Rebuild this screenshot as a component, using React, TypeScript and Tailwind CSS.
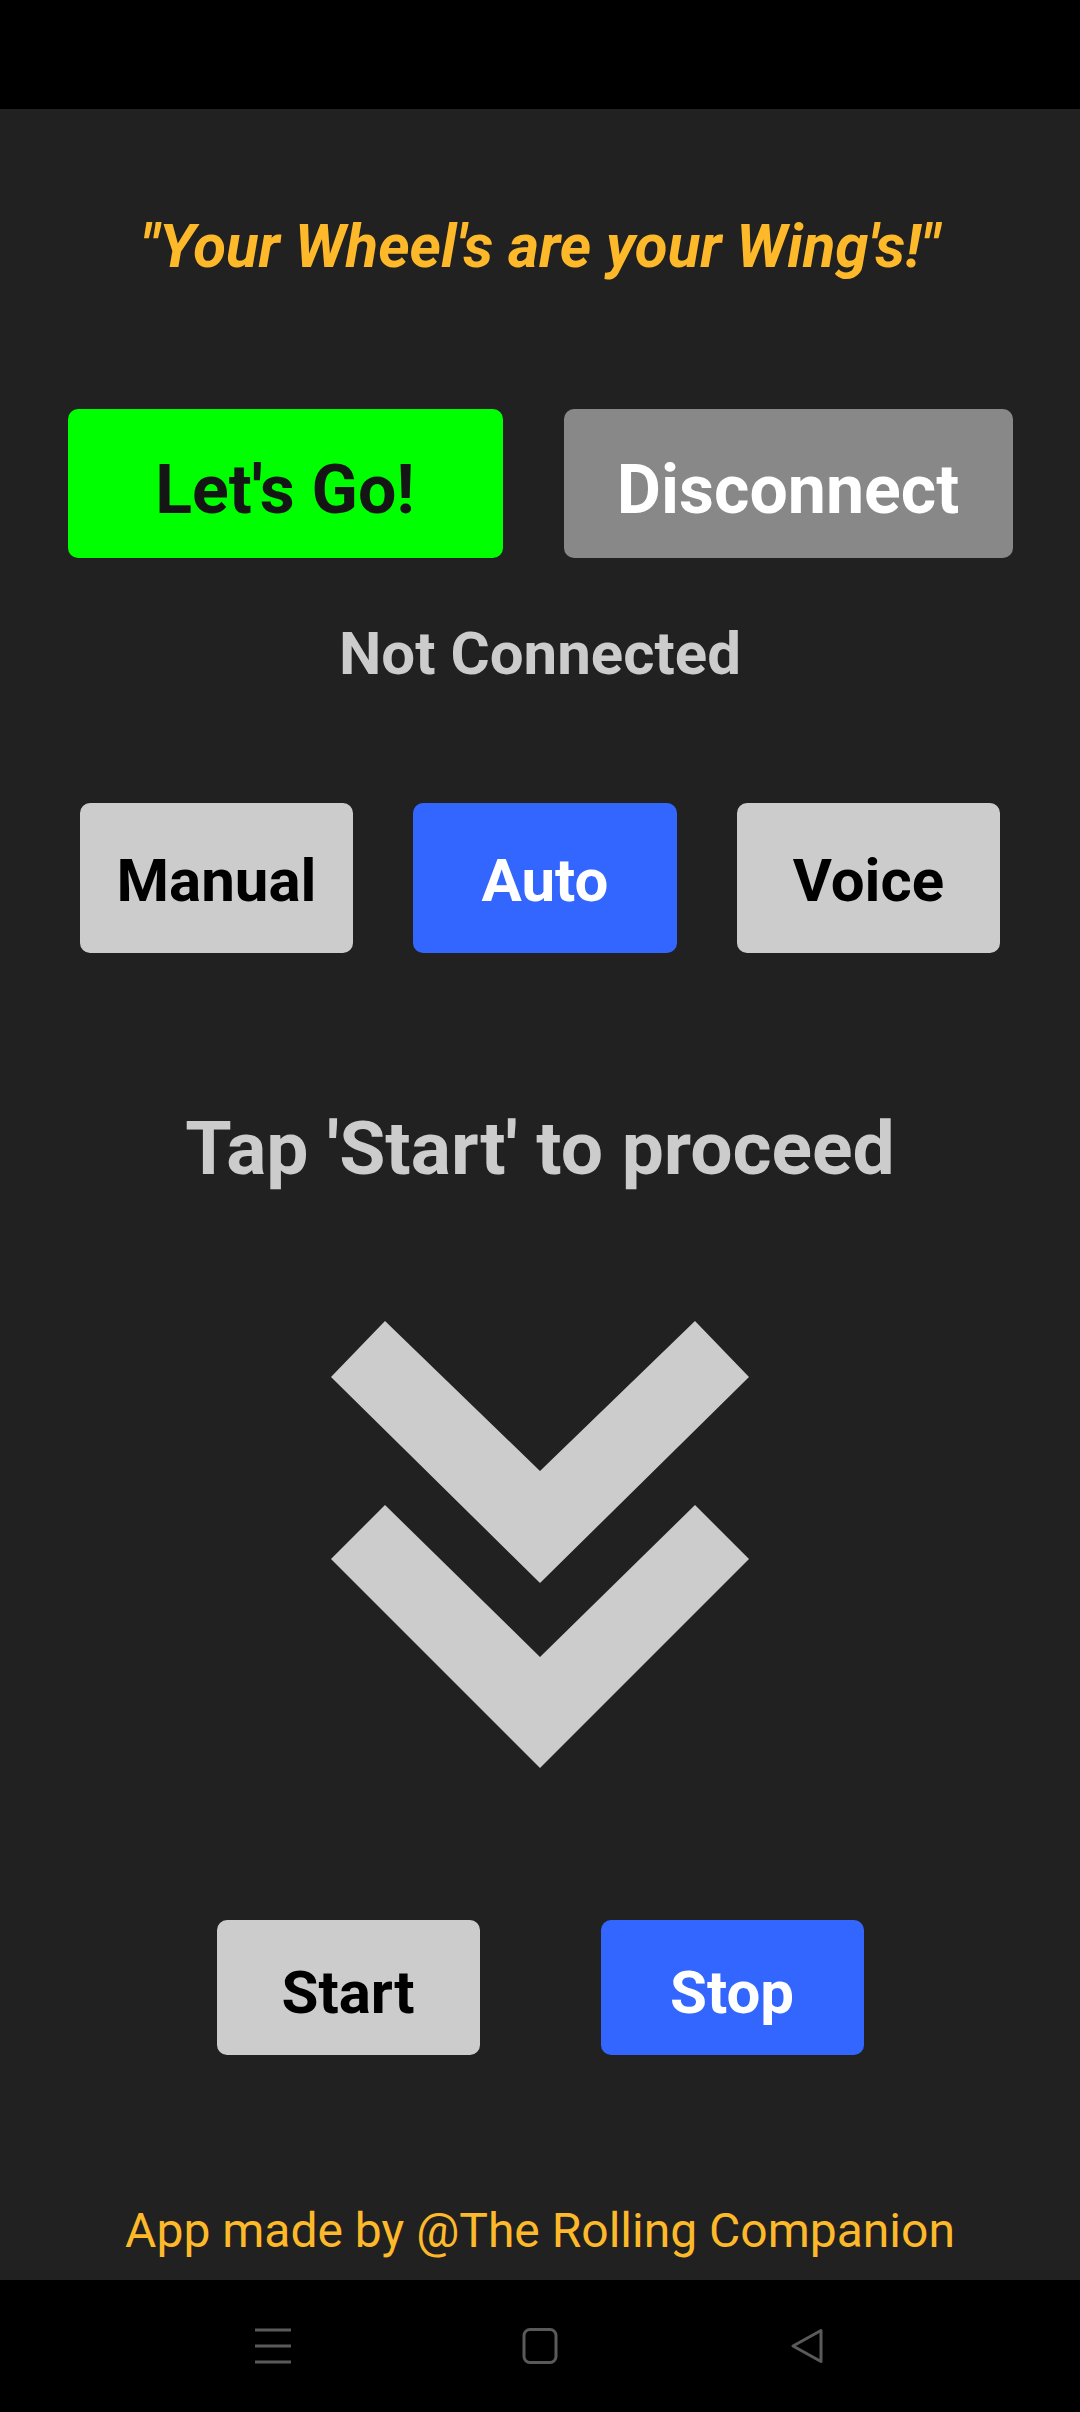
import React from 'react';

const DoubleChevron: React.FC = () => (
    <svg width="418" height="447" viewBox="0 0 418 447" className="block">
        <polygon points="0,56 54,0 209,150 364,0 418,56 209,262" fill="#cccccc" />
        <polygon points="0,238 54,184 209,336 364,184 418,238 209,447" fill="#cccccc" />
    </svg>
);

const NavBar: React.FC = () => (
    <div className="h-[132px] shrink-0 bg-black flex items-center justify-center gap-[231px]">
        {/* recent apps */}
        <svg width="36" height="36" viewBox="0 0 36 36">
            <path d="M0 2h36M0 18h36M0 34h36" stroke="#5a5a5a" strokeWidth="3" />
        </svg>
        {/* home */}
        <svg width="36" height="36" viewBox="0 0 36 36">
            <rect x="2" y="1.5" width="32" height="33" rx="6" fill="none" stroke="#5a5a5a" strokeWidth="3" />
        </svg>
        {/* back */}
        <svg width="36" height="36" viewBox="0 0 36 36">
            <path d="M32 2.5 L4 18 L32 33.5 Z" fill="none" stroke="#5a5a5a" strokeWidth="3" strokeLinejoin="round" />
        </svg>
    </div>
);

const App: React.FC = () => {
    const modes = [
        { label: 'Manual', w: 'w-[273px]', active: false },
        { label: 'Auto', w: 'w-[264px]', active: true },
        { label: 'Voice', w: 'w-[263px]', active: false },
    ];

    return (
        <div className="w-[1080px] h-[2412px] flex flex-col bg-[#212121] [font-family:Roboto,'Noto_Sans',sans-serif]">
            {/* status bar */}
            <div className="h-[109px] shrink-0 bg-black" />

            <main className="flex-1 flex flex-col items-center">
                <p className="mt-[108px] text-[60px] leading-none font-bold italic text-[#fdb92a]">
                    "Your Wheel's are your Wing's!"
                </p>

                <div className="mt-[132px] flex gap-[61px]">
                    <button className="w-[435px] h-[149px] pt-[12px] rounded-[10px] bg-[#00ff00] flex items-center justify-center text-[68px] leading-none font-bold text-[#151515]">
                        Let's Go!
                    </button>
                    <button className="w-[449px] h-[149px] pt-[12px] rounded-[10px] bg-[#888888] flex items-center justify-center text-[68px] leading-none font-bold text-white">
                        Disconnect
                    </button>
                </div>

                <p className="mt-[66px] text-[60px] leading-none font-bold text-[#cccccc]">Not Connected</p>

                <div className="mt-[119px] flex gap-[60px]">
                    {modes.map(m => (
                        <button
                            key={m.label}
                            className={`${m.w} h-[150px] pt-[6px] rounded-[10px] flex items-center justify-center text-[60px] leading-none font-bold ${m.active ? 'bg-[#3366ff] text-white' : 'bg-[#cccccc] text-black'}`}
                        >
                            {m.label}
                        </button>
                    ))}
                </div>

                <p className="mt-[158px] text-[75px] leading-none font-bold text-[#cccccc]">Tap 'Start' to proceed</p>

                <div className="mt-[135px]">
                    <DoubleChevron />
                </div>

                <div className="mt-[152px] flex gap-[121px]">
                    <button className="w-[263px] h-[135px] pt-[10px] rounded-[10px] bg-[#cccccc] flex items-center justify-center text-[60px] leading-none font-bold text-black">
                        Start
                    </button>
                    <button className="w-[263px] h-[135px] pt-[10px] rounded-[10px] bg-[#3366ff] flex items-center justify-center text-[60px] leading-none font-bold text-white">
                        Stop
                    </button>
                </div>

                <p className="mt-[152px] text-[48px] leading-none text-[#fdb92a]">App made by @The Rolling Companion</p>
            </main>

            <NavBar />
        </div>
    );
};

export default App;
